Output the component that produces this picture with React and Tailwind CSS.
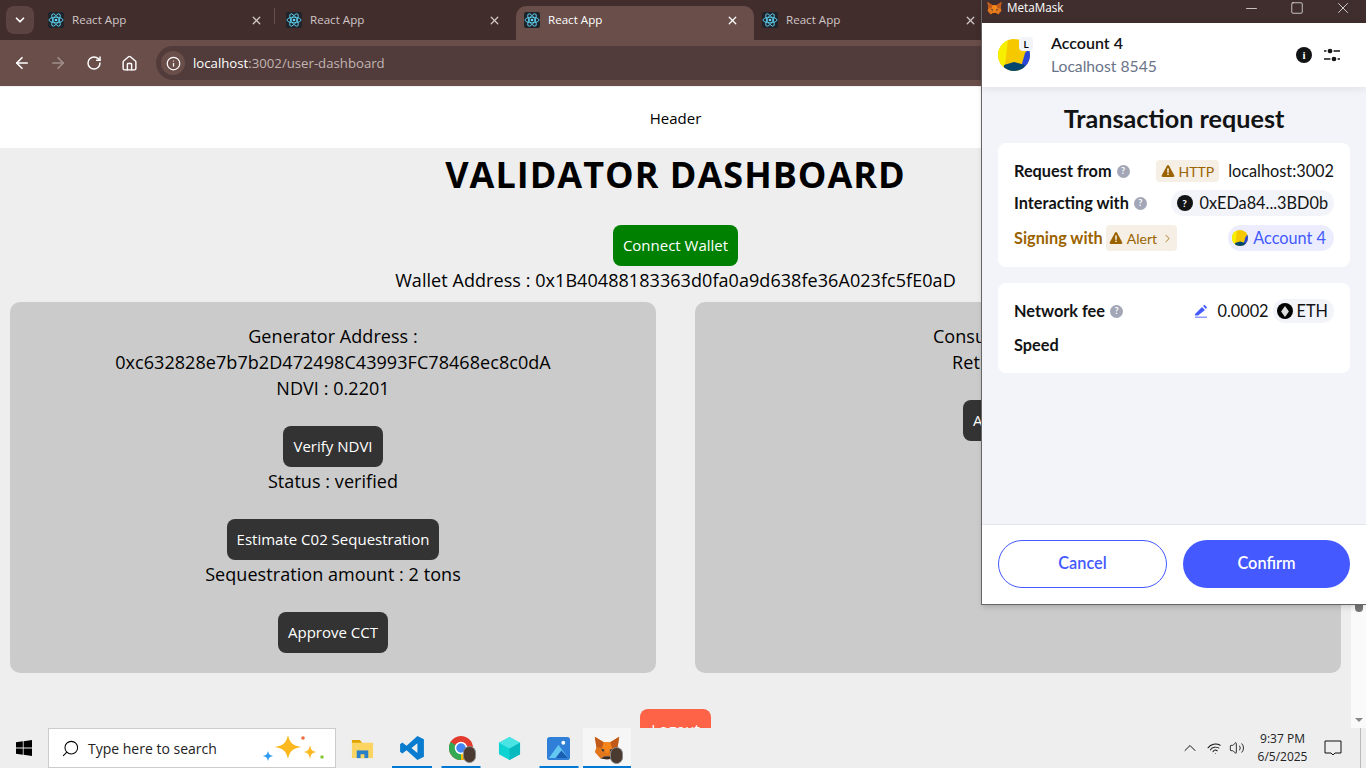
import React from 'react';
import { X, ChevronDown, ChevronRight, ChevronUp, ArrowLeft, ArrowRight, RotateCw, Home, Info, Search, Minus, Square, Volume2, Wifi } from 'lucide-react';

const ReactFav = () => (
  <div className="w-4 h-4 rounded-[2px] bg-[#20232a] flex items-center justify-center shrink-0">
    <svg viewBox="-12 -12 24 24" className="w-4 h-4" fill="none" stroke="#61dafb" strokeWidth="1.3">
      <circle r="2" fill="#61dafb" stroke="none" />
      <ellipse rx="10.5" ry="4.2" />
      <ellipse rx="10.5" ry="4.2" transform="rotate(60)" />
      <ellipse rx="10.5" ry="4.2" transform="rotate(120)" />
    </svg>
  </div>
);

const Tab = ({ active, sep }) => (
  <div className={`w-[238px] h-[34px] shrink-0 flex items-center pl-2 pr-[10px] pb-[6px] relative ${active ? 'bg-[#6a4e4a] rounded-t-[10px]' : ''}`}>
    <ReactFav />
    <span className={`ml-2 text-[11.6px] flex-1 ${active ? 'text-white' : 'text-[#d0c6c6]'}`}>React App</span>
    <X size={13} strokeWidth={2.4} className={`mr-[5px] ${active ? 'text-white' : 'text-[#d0c6c6]'}`} />
    {sep && <div className="absolute right-[3px] top-[2px] w-px h-4 bg-[#6a4e4a]" />}
  </div>
);

const Fox = ({ className }) => (
  <svg viewBox="0 0 32 30" className={className}>
    <polygon points="1,1 12,8 20,8 31,1 29,14 31,20 24,28 19,25 13,25 8,28 1,20 3,14" fill="#e2761b" />
    <polygon points="1,1 12,8 10,15 3,14" fill="#c0591a" />
    <polygon points="31,1 20,8 22,15 29,14" fill="#c0591a" />
    <polygon points="12,8 20,8 22,15 16,22 10,15" fill="#f6851b" />
    <polygon points="8,28 13,25 19,25 24,28 16,29" fill="#3b2a20" />
    <polygon points="9,16 13,17 11,20" fill="#233447" />
    <polygon points="23,16 19,17 21,20" fill="#233447" />
  </svg>
);

const Jazz = ({ className }) => (
  <svg viewBox="0 0 32 32" className={className}>
    <defs><clipPath id="jz"><circle cx="16" cy="16" r="16" /></clipPath></defs>
    <g clipPath="url(#jz)">
      <rect width="32" height="32" fill="#f5c800" />
      <polygon points="0,0 10,0 7,26 0,32" fill="#f6f000" />
      <polygon points="27,14 32,8 32,32 22,32" fill="#2a46d8" />
      <polygon points="6,26 16,23 27,26 24,32 6,32" fill="#01466e" />
    </g>
  </svg>
);

const Help = ({ className = '' }) => (
  <span className={`w-[13px] h-[13px] rounded-full bg-[#a2a6b6] text-white text-[9px] font-bold inline-flex items-center justify-center ${className}`}>?</span>
);

const Warn = ({ className = 'w-[14px] h-[14px]' }) => (
  <svg viewBox="0 0 16 16" className={className}>
    <path d="M8 1.2c.5 0 .9.3 1.2.8l5.9 10.8c.5 1-.1 2-1.2 2H2.1c-1.1 0-1.7-1-1.2-2L6.800 2c.3-.5.700-.8 1.200-.8z" fill="#9a6300" />
    <rect x="7.200" y="5" width="1.600" height="5" fill="#fff" />
    <rect x="7.200" y="11" width="1.600" height="1.600" fill="#fff" />
  </svg>
);

const Btn = ({ children, className = 'bg-[#333333]' }) => (
  <button className={`h-[41px] shrink-0 px-[10px] rounded-lg text-white text-[15px] mt-[25px] mb-px ${className}`}>{children}</button>
);

const Line = ({ children }) => <div className="text-[18px] leading-[26px] tracking-[0.06px] text-black shrink-0">{children}</div>;

const Underline = ({ w }) => (
  <div className={`absolute bottom-0 left-1/2 -translate-x-1/2 h-[2px] bg-[#0078d4] ${w}`} />
);

const TaskIcon = ({ children, w = 'w-[49px]', line, active }) => (
  <div className={`relative h-10 flex items-center justify-center shrink-0 ${w} ${active ? 'bg-[#f6f6f6]' : ''}`}>
    {children}
    {line && <Underline w={line} />}
  </div>
);

const Badge = () => <span className="absolute right-[-3px] bottom-[-3px] w-[13px] h-[17px] rounded-full bg-[#4a3a30] border border-[#888]" />;

export default function App() {
  return (
    <div className="relative w-[1366px] h-[768px] overflow-hidden flex flex-col bg-[#eeeeee] font-['Open_Sans',sans-serif]">
      {/* Browser tabs */}
      <div className="h-10 bg-[#422d2d] flex items-end shrink-0">
        <div className="w-10 h-full flex items-center justify-center">
          <div className="w-[28px] h-[28px] -mt-[1px] rounded-lg bg-[#5b4341] flex items-center justify-center">
            <ChevronDown size={14} strokeWidth={3} className="text-white" />
          </div>
        </div>
        <Tab sep />
        <Tab />
        <Tab active />
        <Tab />
      </div>
      {/* Toolbar */}
      <div className="h-[46px] bg-[#6a4e4a] flex items-center shrink-0 pl-[13px]">
        <ArrowLeft size={18} strokeWidth={2.2} className="text-white" />
        <ArrowRight size={18} strokeWidth={2.2} className="text-[#a08e8a] ml-[18px]" />
        <RotateCw size={16} strokeWidth={2.2} className="text-white ml-[19px]" />
        <Home size={17} strokeWidth={2} className="text-white ml-[19px]" />
        <div className="ml-[18px] flex-1 h-[34px] bg-[#513c3b] rounded-l-full flex items-center pl-[5px]">
          <div className="w-6 h-6 rounded-full bg-[#6a4e4a] flex items-center justify-center">
            <Info size={15} strokeWidth={2} className="text-white" />
          </div>
          <span className="ml-[8px] mt-[2px] text-[13.2px] text-white">localhost<span className="text-[#c2b4b2]">:3002/user-dashboard</span></span>
        </div>
      </div>
      <div className="h-px bg-[#f0eeee] shrink-0" />

      {/* Page viewport */}
      <div className="flex-1 min-h-0 flex overflow-hidden">
        <div className="flex-1 min-w-0 flex flex-col items-center">
          <div className="w-full h-[61px] pt-[2px] bg-white shrink-0 flex items-center justify-center text-[15px] text-black">Header</div>
          <h1 className="mt-[3px] mb-[2px] h-[47px] shrink-0 leading-[47px] text-[36px] tracking-[1px] font-bold text-black">VALIDATOR DASHBOARD</h1>
          <Btn className="bg-[#008000]">Connect Wallet</Btn>
          <Line>Wallet Address : 0x1B40488183363d0fa0a9d638fe36A023fc5fE0aD</Line>
          <div className="w-full px-[10px] mt-[9px] grid grid-cols-2 gap-[39px] shrink-0">
            <div className="h-[371px] bg-[#cbcbcb] rounded-[10px] pt-[21px] flex flex-col items-center text-center">
              <Line>Generator Address :</Line>
              <Line>0xc632828e7b7b2D472498C43993FC78468ec8c0dA</Line>
              <Line>NDVI : 0.2201</Line>
              <Btn>Verify NDVI</Btn>
              <Line>Status : verified</Line>
              <Btn>Estimate C02 Sequestration</Btn>
              <Line>Sequestration amount : 2 tons</Line>
              <Btn>Approve CCT</Btn>
            </div>
            <div className="h-[371px] bg-[#cbcbcb] rounded-[10px] pt-[21px] flex flex-col items-center text-center">
              <Line>Consumer Address :</Line>
              <Line>Retired CCTs : 0</Line>
              <Btn>Approve CCT</Btn>
            </div>
          </div>
          <button className="mt-[36px] w-[71px] h-[41px] rounded-lg bg-[#ff6347] text-white text-[15px] shrink-0">Logout</button>
        </div>
        {/* Scrollbar */}
        <div className="w-[15px] bg-[#fafafa] flex flex-col items-center shrink-0">
          <div className="mt-[15px] w-[8px] h-[510px] bg-[#777777] rounded-full" />
          <div className="flex-1" />
          <div className="mb-[6px] w-0 h-0 border-x-[4px] border-x-transparent border-t-[4px] border-t-[#888]" />
        </div>
      </div>

      {/* Taskbar */}
      <div className="h-10 bg-[#eeeeee] flex items-center shrink-0 relative">
        <div className="w-12 flex items-center justify-center">
          <svg viewBox="0 0 16 16" className="w-4 h-4" fill="#000">
            <path d="M0 2.300 6.800 1.300V7.600H0zM7.600 1.200 16 0V7.600H7.600zM0 8.400H6.800V14.700L0 13.700zM7.600 8.400H16V16L7.600 14.800z" />
          </svg>
        </div>
        <div className="w-[288px] h-10 bg-white border border-[#cccccc] flex items-center pl-[12px] relative shrink-0">
          <Search size={19} strokeWidth={1.3} className="text-black -scale-x-100" />
          <span className="ml-[8px] text-[14px] text-[#222]">Type here to search</span>
          <svg viewBox="0 0 66 30" className="absolute right-[7px] top-[3px] w-[66px] h-[30px]">
            <path d="M26 3 C28 11 30 13 39 15 C30 17 28 19 26 27 C24 19 22 17 13 15 C22 13 24 11 26 3Z" fill="#fbb81f" />
            <path d="M48 13 C49 18 50 19 54 20 C50 21 49 22 48 27 C47 22 46 21 42 20 C46 19 47 18 48 13Z" fill="#fbb81f" />
            <path d="M6 19 C7 22 7 23 11 24 C7 25 7 26 6 29 C5 26 5 25 1 24 C5 23 5 22 6 19Z" fill="#2d9cf0" />
            <circle cx="41" cy="6" r="1.800" fill="#ef6a3a" />
            <circle cx="60" cy="25" r="1.800" fill="#8cc63f" />
          </svg>
        </div>
        <div className="flex items-center ml-[2px]">
          <TaskIcon>
            <svg viewBox="0 0 24 24" className="w-[23px] h-[23px]">
              <path d="M1 3h8l2 2h0v3H1z" fill="#e0a400" />
              <rect x="1" y="6" width="22" height="16" fill="#fcd462" />
              <rect x="6" y="14" width="12" height="8" fill="#2a7fc9" />
              <rect x="10" y="18" width="4" height="4" fill="#fcd462" />
            </svg>
          </TaskIcon>
          <TaskIcon line="w-[40px]">
            <svg viewBox="0 0 24 24" className="w-[26px] h-[26px]">
              <path d="M17 1 23 4V20L17 23 7 14 3 17 1 15.500V8.500L3 7 7 10zM17 7.500 11.500 12 17 16.500z" fill="#0a7ccf" />
            </svg>
          </TaskIcon>
          <TaskIcon line="w-[39px]">
            <div className="relative w-[24px] h-[24px]">
              <svg viewBox="0 0 24 24" className="w-6 h-6">
                <circle cx="12" cy="12" r="12" fill="#e33b2e" />
                <path d="M12 12 1.600 6A12 12 0 0 0 12 24z" fill="#34a853" />
                <path d="M12 12H24A12 12 0 0 1 12 24z" fill="#fbbc05" />
                <circle cx="12" cy="12" r="5.500" fill="#4285f4" stroke="#fff" strokeWidth="1.500" />
              </svg>
              <Badge />
            </div>
          </TaskIcon>
          <TaskIcon>
            <svg viewBox="0 0 24 26" className="w-[23px] h-[25px]">
              <polygon points="12,1 23,7 23,19 12,25 1,19 1,7" fill="#0ed3d3" />
              <polygon points="12,1 23,7 12,13 1,7" fill="#4be4e4" />
              <polygon points="12,13 23,7 23,19 12,25" fill="#08b9c0" />
            </svg>
          </TaskIcon>
          <TaskIcon line="w-[39px]">
            <svg viewBox="0 0 24 24" className="w-[23px] h-[23px]">
              <rect width="24" height="24" rx="3" fill="#2f7fd8" />
              <circle cx="17" cy="6" r="2" fill="#fff" />
              <polygon points="2,22 12,8 22,22" fill="#63c7f2" />
              <polygon points="9,22 15,14 22,22" fill="#1a5fb4" />
            </svg>
          </TaskIcon>
          <TaskIcon w="w-[48px]" line="w-[48px]" active>
            <div className="relative w-[26px] h-[26px]">
              <Fox className="w-[26px] h-[26px]" />
              <Badge />
            </div>
          </TaskIcon>
        </div>
        <div className="flex-1" />
        <div className="flex items-center text-[#111]">
          <ChevronUp size={20} strokeWidth={1.2} />
          <Wifi size={15} strokeWidth={1.5} className="ml-[7px] -rotate-12" />
          <Volume2 size={16} strokeWidth={1.3} className="ml-[7px]" />
          <div className="w-[75px] flex flex-col items-center text-[12px] leading-[18px] text-[#222]">
            <span>9:37 PM</span>
            <span>6/5/2025</span>
          </div>
          <svg viewBox="0 0 18 18" className="w-[18px] h-[18px] ml-[4px]" fill="none" stroke="#111" strokeWidth="1">
            <path d="M1 2H17V14H11L9 16 7 14H1z" />
          </svg>
          <div className="w-px h-10 bg-[#bbb] ml-[18px] mr-[5px]" />
        </div>
      </div>

      {/* MetaMask window */}
      <div className="absolute left-[981px] top-0 w-[385px] h-[605px] flex flex-col border-l border-b border-[#666] bg-[#f2f4f9] font-['Lato',sans-serif] shadow-md">
        <div className="h-[23px] pb-[7px] bg-[#402e2e] flex items-center shrink-0 font-['Open_Sans',sans-serif]">
          <Fox className="w-[15px] h-[15px] ml-[5px]" />
          <span className="ml-[5px] text-[11.7px] text-white">MetaMask</span>
          <div className="flex-1" />
          <Minus size={17} strokeWidth={1} className="text-white" />
          <Square size={14} strokeWidth={1.2} className="text-white ml-[30px]" />
          <X size={18} strokeWidth={1} className="text-white ml-[30px] mr-[14px]" />
        </div>
        <div className="h-[64px] bg-white flex items-center shrink-0 pl-[16px] pr-[25px] shadow-[0_2px_8px_rgba(0,0,0,0.08)]">
          <div className="relative w-[32px] h-[32px] shrink-0">
            <Jazz className="w-[32px] h-[32px]" />
            <span className="absolute right-[-3px] top-[-2px] w-[14px] h-[14px] rounded-[4px] bg-[#f2f4f9] text-[10px] font-semibold text-black flex items-center justify-center">L</span>
          </div>
          <div className="ml-[21px] flex-1 -mt-[2px]">
            <div className="text-[16px] leading-[24px] font-semibold text-[#121314]">Account 4</div>
            <div className="text-[15.7px] leading-[22px] text-[#6a7488]">Localhost 8545</div>
          </div>
          <span className="w-4 h-4 rounded-full bg-[#121314] text-white flex items-center justify-center text-[11px] font-bold font-['Liberation_Serif',serif]">i</span>
          <svg viewBox="0 0 18 18" className="w-[18px] h-[18px] ml-[11px]" fill="none" stroke="#121314" strokeWidth="1.300">
            <path d="M1 5H17M1 13H17" />
            <circle cx="7" cy="5" r="3" fill="#121314" stroke="#fff" />
            <circle cx="11" cy="13" r="3" fill="#121314" stroke="#fff" />
          </svg>
        </div>
        <h2 className="mt-[14px] h-[34px] leading-[34px] text-center text-[25.2px] font-bold text-[#121314] shrink-0">Transaction request</h2>
        <div className="mx-[16px] mt-[8px] h-[124px] bg-white rounded-lg px-[16px] pt-[17px] text-[16.3px] text-[#121314] shrink-0">
          <div className="h-[22px] flex items-center justify-between">
            <div className="flex items-center font-bold">Request from<Help className="ml-[5px]" /></div>
            <div className="flex items-center">
              <span className="h-[22px] px-[5px] bg-[#f5efe5] rounded flex items-center gap-[4px] text-[#9a6300] text-[14px]"><Warn />HTTP</span>
              <span className="ml-[9px]">localhost:3002</span>
            </div>
          </div>
          <div className="mt-[9px] h-[26px] -translate-y-[1px] flex items-center justify-between">
            <div className="flex items-center font-bold">Interacting with<Help className="ml-[5px]" /></div>
            <span className="h-[26px] px-[6px] bg-[#f2f4f9] rounded-full flex items-center gap-[7px]">
              <span className="w-4 h-4 rounded-full bg-[#121314] text-white text-[10px] font-bold flex items-center justify-center">?</span>0xEDa84...3BD0b
            </span>
          </div>
          <div className="mt-[8px] h-[26px] flex items-center justify-between">
            <div className="flex items-center font-bold text-[#9a6300]">Signing with
              <span className="ml-[3px] h-[26px] px-[3px] bg-[#f5efe5] rounded flex items-center gap-[4px] text-[14px] font-normal"><Warn />Alert<ChevronRight size={13} strokeWidth={1.5} /></span>
            </div>
            <span className="h-[26px] pl-[4px] pr-[8px] bg-[#ebedff] rounded-full flex items-center gap-[5px] text-[#4459ff]">
              <Jazz className="w-4 h-4" />Account 4
            </span>
          </div>
        </div>
        <div className="mx-[16px] mt-[16px] h-[90px] bg-white rounded-lg px-[16px] pt-[16px] text-[16.3px] text-[#121314] shrink-0">
          <div className="h-[24px] flex items-center justify-between">
            <div className="flex items-center font-bold">Network fee<Help className="ml-[5px]" /></div>
            <div className="flex items-center">
              <svg viewBox="0 0 14 14" className="w-[14px] h-[14px]" fill="#4459ff">
                <path d="M1 10 8 3 11 6 4 11.500H1zM9 2 10.500.8 13 3.200 12 5z" />
                <rect x="1" y="12.500" width="12" height="1.500" opacity=".6" />
              </svg>
              <span className="ml-[9px]">0.0002</span>
              <span className="ml-[4px] h-[24px] pl-[4px] pr-[6px] bg-[#f2f4f9] rounded-full flex items-center gap-[4px]">
                <span className="w-4 h-4 rounded-full bg-black flex items-center justify-center">
                  <svg viewBox="0 0 10 14" className="w-[8px] h-[11px]"><polygon points="5,0 10,7 5,14 0,7" fill="#ddd" /></svg>
                </span>ETH
              </span>
            </div>
          </div>
          <div className="mt-[10px] h-[24px] flex items-center font-bold">Speed</div>
        </div>
        <div className="flex-1" />
        <div className="h-[80px] bg-white border-t border-[#e4e6ec] flex items-center gap-[16px] px-[16px] pb-[2px] shrink-0">
          <button className="flex-1 h-[48px] rounded-full border border-[#4459ff] text-[#4459ff] text-[16.3px] font-semibold">Cancel</button>
          <button className="flex-1 h-[48px] rounded-full bg-[#4459ff] text-white text-[16.3px] font-semibold">Confirm</button>
        </div>
      </div>
    </div>
  );
}
